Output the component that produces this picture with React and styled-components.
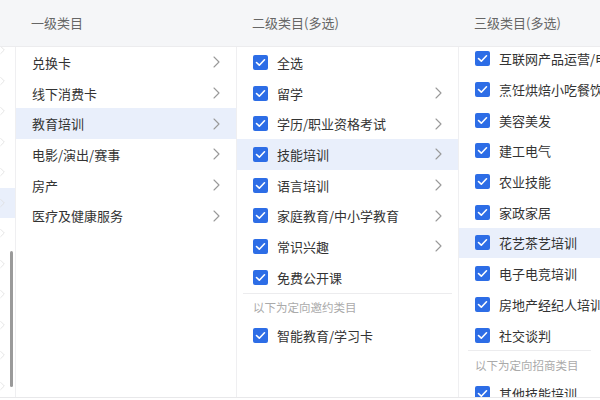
import React from 'react';
import styled, {createGlobalStyle} from 'styled-components';

const GlobalStyle = createGlobalStyle`
  html, body {
    margin: 0;
    padding: 0;
    background: #fff;
  }
  body {
    font-family: "Noto Sans CJK SC", "Noto Sans", sans-serif;
    color: #333;
  }
`;

const level0 = ['', '', '', '', '', '', '', '', '', '', '', ''];
const level1 = ['兑换卡', '线下消费卡', '教育培训', '电影/演出/赛事', '房产', '医疗及健康服务'];
const level2 = [
    {name: '全选'},
    {name: '留学', more: true},
    {name: '学历/职业资格考试', more: true},
    {name: '技能培训', more: true, active: true},
    {name: '语言培训', more: true},
    {name: '家庭教育/中小学教育', more: true},
    {name: '常识兴趣', more: true},
    {name: '免费公开课'},
];
const level2Extra = ['智能教育/学习卡'];
const level3 = [
    '互联网产品运营/电商', '烹饪烘焙小吃餐饮', '美容美发', '建工电气', '农业技能',
    '家政家居', '花艺茶艺培训', '电子电竞培训', '房地产经纪人培训', '社交谈判',
];
const level3Extra = ['其他技能培训'];

const Chevron = ({color}) => (
    <svg width="7" height="12" viewBox="0 0 7 12" fill="none">
        <polyline points="1,1 6,6 1,11" stroke={color || '#999'} strokeWidth="1.1"
                  strokeLinecap="round" strokeLinejoin="round"/>
    </svg>
);

const Check = () => (
    <CheckBox>
        <svg width="11" height="9" viewBox="0 0 11 9" fill="none">
            <polyline points="1.5,4.5 4.3,7.2 9.5,1.8" stroke="#fff" strokeWidth="1.6"
                      strokeLinecap="round" strokeLinejoin="round"/>
        </svg>
    </CheckBox>
);

const App = () => {
    return (
        <Frame>
            <GlobalStyle/>
            <HeaderBar>
                <HeadCell/>
                <HeadCell>一级类目</HeadCell>
                <HeadCell>二级类目(多选)</HeadCell>
                <HeadCell>三级类目(多选)</HeadCell>
            </HeaderBar>
            <Body>
                <Column>
                    <List offset={-12}>
                        {level0.map((_, i) => (
                            <ParentRow key={i} active={i === 5}>
                                <Chevron color="#dedede"/>
                            </ParentRow>
                        ))}
                    </List>
                    <ScrollThumb/>
                </Column>

                <Column>
                    <List>
                        {level1.map((name, i) => (
                            <Row key={name} active={i === 2}>
                                <Label>{name}</Label>
                                <Chevron/>
                            </Row>
                        ))}
                    </List>
                </Column>

                <Column>
                    <List>
                        {level2.map(item => (
                            <Row key={item.name} active={item.active}>
                                <CheckLabel>
                                    <Check/>
                                    <Label>{item.name}</Label>
                                </CheckLabel>
                                {item.more && <Chevron/>}
                            </Row>
                        ))}
                        <Divider/>
                        <SectionNote>以下为定向邀约类目</SectionNote>
                        {level2Extra.map(name => (
                            <Row key={name}>
                                <CheckLabel>
                                    <Check/>
                                    <Label>{name}</Label>
                                </CheckLabel>
                            </Row>
                        ))}
                    </List>
                </Column>

                <Column last>
                    <List offset={-3.5}>
                        {level3.map((name, i) => (
                            <Row key={name} active={i === 6}>
                                <CheckLabel>
                                    <Check/>
                                    <Label>{name}</Label>
                                </CheckLabel>
                            </Row>
                        ))}
                        <Divider inset={9}/>
                        <SectionNote>以下为定向招商类目</SectionNote>
                        {level3Extra.map(name => (
                            <Row key={name}>
                                <CheckLabel>
                                    <Check/>
                                    <Label>{name}</Label>
                                </CheckLabel>
                            </Row>
                        ))}
                    </List>
                </Column>
            </Body>
        </Frame>
    );
};

const columns = '16px 221px 222px 1fr';

const Frame = styled.div`
  width: 600px;
  height: 400px;
  overflow: hidden;
  display: flex;
  flex-direction: column;
  background: #fff;
`;

const HeaderBar = styled.div`
  display: grid;
  grid-template-columns: ${columns};
  height: 46px;
  flex-shrink: 0;
  background: #f5f6f8;
  border-bottom: 1px solid #ececee;
`;

const HeadCell = styled.div`
  display: flex;
  align-items: center;
  padding-left: 15px;
  padding-bottom: 2px;
  font-size: 13px;
  color: #666;
  white-space: nowrap;
  overflow: hidden;
`;

const Body = styled.div`
  display: grid;
  grid-template-columns: ${columns};
  height: 350px;
  flex-shrink: 0;
  border-bottom: 1px solid #e8e8ea;
`;

const Column = styled.div`
  position: relative;
  overflow: hidden;
  border-right: ${props => props.last ? 'none' : '1px solid #efeff1'};
`;

const List = styled.div`
  display: flex;
  flex-direction: column;
  margin-top: ${props => props.offset || 0}px;
`;

const Row = styled.div`
  display: flex;
  align-items: center;
  justify-content: space-between;
  flex-shrink: 0;
  height: 30.7px;
  padding: 0 16px;
  background: ${props => props.active ? '#e9effb' : 'transparent'};
  white-space: nowrap;
`;

const ParentRow = styled.div`
  display: flex;
  align-items: center;
  justify-content: flex-end;
  flex-shrink: 0;
  height: 30.5px;
  padding-right: 10px;
  background: ${props => props.active ? '#e9effb' : 'transparent'};
`;

const ScrollThumb = styled.div`
  position: absolute;
  left: 10px;
  top: 204px;
  width: 3px;
  height: 136px;
  border-radius: 2px;
  background: #9a9a9a;
`;

const CheckLabel = styled.div`
  display: flex;
  align-items: center;
  gap: 9px;
  min-width: 0;
`;

const CheckBox = styled.span`
  display: inline-flex;
  align-items: center;
  justify-content: center;
  width: 15px;
  height: 15px;
  flex-shrink: 0;
  border-radius: 2px;
  background: #2d6de6;
`;

const Label = styled.span`
  font-size: 13px;
  line-height: 1;
  color: #333;
`;

const Divider = styled.div`
  height: 1px;
  margin: 0 ${props => props.inset || 6}px;
  flex-shrink: 0;
  background: #ececee;
`;

const SectionNote = styled.div`
  height: 27px;
  padding-left: 16px;
  display: flex;
  align-items: center;
  flex-shrink: 0;
  font-size: 11.5px;
  color: #aaa;
  white-space: nowrap;
`;

export default App;
